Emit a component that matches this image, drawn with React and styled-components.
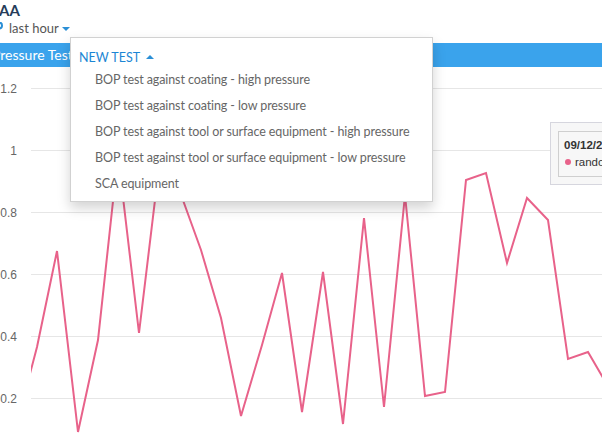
import React from 'react';
import styled, { createGlobalStyle } from 'styled-components';

const GlobalStyle = createGlobalStyle`
  html, body {
    margin: 0;
    padding: 0;
    background: #fff;
    overflow: hidden;
  }
  body {
    font-family: Lato, "Open Sans", sans-serif;
  }
`;

const Page = styled.div`
  position: relative;
  width: 602px;
  height: 433px;
  overflow: hidden;
`;

const Header = styled.div`
  padding-top: 1px;
  height: 43px;
  box-sizing: border-box;
`;

const Title = styled.div`
  font-weight: 700;
  font-size: 15px;
  line-height: 18px;
  color: #263c5a;
  margin-left: -1px;
`;

const RangeRow = styled.div`
  display: flex;
  align-items: center;
  height: 18px;
  font-size: 13px;
  color: #555;
  margin-left: -7px;
`;

const PinIcon = styled.svg`
  width: 12px;
  height: 12px;
  margin-right: 4px;
  flex: none;
`;

const Caret = styled.span`
  display: inline-block;
  width: 0;
  height: 0;
  margin-left: 3px;
  margin-top: 2px;
  border-left: 4px solid transparent;
  border-right: 4px solid transparent;
  border-top: 4px solid #2b8fd6;
`;

const CaretUp = styled.span`
  display: inline-block;
  width: 0;
  height: 0;
  margin-left: 6px;
  margin-bottom: 2px;
  border-left: 4px solid transparent;
  border-right: 4px solid transparent;
  border-bottom: 4px solid #2b8fd6;
`;

const Bar = styled.div`
  height: 24px;
  background: #3aa3ec;
  color: #fff;
  font-size: 14px;
  line-height: 24px;
  white-space: nowrap;
  overflow: hidden;
`;

const BarLabel = styled.span`
  margin-left: -8px;
`;

const ChartSvg = styled.svg`
  display: block;
  width: 602px;
  height: 366px;
`;

const Dropdown = styled.div`
  position: absolute;
  left: 70px;
  top: 37px;
  width: 363px;
  height: 165px;
  box-sizing: border-box;
  background: #fff;
  border: 1px solid rgba(0, 0, 0, 0.18);
  box-shadow: 0 6px 12px rgba(0, 0, 0, 0.175);
  padding-top: 11px;
`;

const DropHead = styled.div`
  display: flex;
  align-items: center;
  padding-left: 8px;
  height: 17px;
  font-size: 12.5px;
  color: #1c86d4;
`;

const DropItem = styled.div`
  padding-left: 24px;
  height: 26px;
  line-height: 26px;
  font-size: 12.5px;
  letter-spacing: -0.1px;
  color: #666;
  white-space: nowrap;
`;

const Items = styled.div`
  margin-top: 1px;
`;

const Tooltip = styled.div`
  position: absolute;
  left: 550px;
  top: 122px;
  width: 80px;
  height: 63px;
  box-sizing: border-box;
  background: #f7f7f7;
  border: 1px solid #d6d6de;
  padding: 8px 0 0 7px;
  font-family: "Liberation Sans", Arial, sans-serif;
`;

const TooltipInner = styled.div`
  border: 1px solid #cfcfcf;
  height: 46px;
  box-sizing: border-box;
  padding: 5px 0 0 5px;
  font-size: 11.5px;
  color: #333;
  white-space: nowrap;
`;

const TipDate = styled.div`
  font-weight: 700;
  line-height: 16px;
`;

const TipRow = styled.div`
  display: flex;
  align-items: center;
  line-height: 18px;
`;

const Dot = styled.span`
  width: 6px;
  height: 6px;
  border-radius: 50%;
  background: #e8628a;
  margin: 0 4px 0 1px;
`;

const ticks = [
  { label: '1.2', y: 88.5 },
  { label: '1', y: 150.5 },
  { label: '0.8', y: 212.5 },
  { label: '0.6', y: 274.5 },
  { label: '0.4', y: 336.5 },
  { label: '0.2', y: 398.5 },
];

const points = [
  [16.5, 425], [37, 347], [57, 251], [78, 432], [98, 340], [118, 155],
  [139, 333], [159, 167], [180, 192], [201, 250], [221, 318], [241, 416],
  [262, 345], [282, 273], [302, 412], [323, 272], [343, 424], [364, 218],
  [384, 407], [405, 195], [425, 396], [445, 392], [466, 180], [486, 173],
  [507, 263], [527, 198], [548, 220], [568, 359], [588, 352], [609, 388],
];

const items = [
  'BOP test against coating - high pressure',
  'BOP test against coating - low pressure',
  'BOP test against tool or surface equipment - high pressure',
  'BOP test against tool or surface equipment - low pressure',
  'SCA equipment',
];

const Chart = () => (
  <ChartSvg viewBox="0 67 602 366">
    <defs>
      <clipPath id="plot">
        <rect x="31" y="67" width="571" height="366" />
      </clipPath>
    </defs>
    {ticks.map(t => (
      <g key={t.label}>
        <line x1="31" x2="602" y1={t.y} y2={t.y} stroke="#e6e6e6" strokeWidth="1" />
        <text
          x="17"
          y={t.y + 4}
          textAnchor="end"
          fontSize="12"
          fill="#666"
          fontFamily="'Liberation Sans', Arial, sans-serif"
        >
          {t.label}
        </text>
      </g>
    ))}
    <polyline
      clipPath="url(#plot)"
      points={points.map(p => p.join(',')).join(' ')}
      fill="none"
      stroke="#e8628a"
      strokeWidth="2"
      strokeLinejoin="miter"
    />
  </ChartSvg>
);

export default function App() {
  return (
    <Page>
      <GlobalStyle />
      <Header>
        <Title>AA</Title>
        <RangeRow>
          <PinIcon viewBox="0 0 12 12">
            <path
              d="M6 11.5 L6 6.5 A3 3 0 1 0 3 3.5"
              fill="none"
              stroke="#2b8fd6"
              strokeWidth="2"
            />
          </PinIcon>
          last hour
          <Caret />
        </RangeRow>
      </Header>
      <Bar>
        <BarLabel>Pressure Test</BarLabel>
      </Bar>
      <Chart />
      <Dropdown>
        <DropHead>
          NEW TEST
          <CaretUp />
        </DropHead>
        <Items>
          {items.map(i => (
            <DropItem key={i}>{i}</DropItem>
          ))}
        </Items>
      </Dropdown>
      <Tooltip>
        <TooltipInner>
          <TipDate>09/12/2019 10:42</TipDate>
          <TipRow>
            <Dot />
            random
          </TipRow>
        </TooltipInner>
      </Tooltip>
    </Page>
  );
}
